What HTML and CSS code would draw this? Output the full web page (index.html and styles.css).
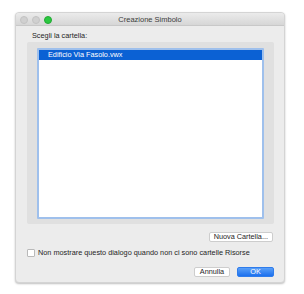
FILE: index.html
```html
<!DOCTYPE html>
<html lang="it">
<head>
    <meta charset="UTF-8">
    <title>Creazione Simbolo</title>
    <link rel="stylesheet" href="styles.css">
</head>
<body>
    <div class="window">
        <div class="titlebar">
            <div class="lights">
                <span class="light"></span>
                <span class="light"></span>
                <span class="light green"></span>
            </div>
            <div class="title">Creazione Simbolo</div>
        </div>
        <div class="content">
            <div class="label">Scegli la cartella:</div>
            <div class="group">
                <div class="list">
                    <div class="row selected">Edificio Via Fasolo.vwx</div>
                </div>
            </div>
            <div class="new-row">
                <button class="btn">Nuova Cartella...</button>
            </div>
            <label class="check-row">
                <span class="checkbox"></span>
                Non mostrare questo dialogo quando non ci sono cartelle Risorse
            </label>
            <div class="actions">
                <button class="btn">Annulla</button>
                <button class="btn primary">OK</button>
            </div>
        </div>
    </div>
</body>
</html>
```

FILE: styles.css
```css
body {
    margin: 0;
    padding: 12px 19px 11px 15px;
    background: #ffffff;
    font-family: "Liberation Sans", Arial, sans-serif;
    font-size: 7.3px;
    color: #1e1e1e;
}
.window {
    width: 270px;
    height: 271px;
    box-sizing: border-box;
    background: #ececec;
    border: 1px solid #d4d4d4;
    border-radius: 4px;
    box-shadow: 0 1px 2px rgba(0, 0, 0, 0.25);
    display: flex;
    flex-direction: column;
    overflow: hidden;
}
.titlebar {
    height: 12px;
    position: relative;
    display: flex;
    align-items: center;
    justify-content: center;
    background: linear-gradient(#ebebeb, #d6d6d6);
    border-bottom: 1px solid #c8c8c8;
}
.lights {
    position: absolute;
    left: 4px;
    top: 3px;
    display: flex;
    gap: 4px;
}
.light {
    width: 6px;
    height: 6px;
    border-radius: 50%;
    background: #d0d0d0;
    border: 0.5px solid #c2c2c2;
}
.light.green {
    background: #2bc840;
    border-color: #22a834;
}
.title {
    font-size: 7.5px;
    color: #3c3c3c;
}
.content {
    padding: 0 10px 0 11px;
    display: flex;
    flex-direction: column;
}
.label {
    margin: 6px 0 0 5px;
    height: 8px;
    line-height: 8px;
}
.group {
    margin-top: 2px;
    height: 182px;
    box-sizing: border-box;
    background: #e0e0e0;
    border-radius: 2px;
    padding: 6px 10px 5px 10px;
    display: flex;
}
.list {
    flex: 1;
    background: #fff;
    border: 2px solid #9fc0ec;
    border-radius: 1px;
}
.row {
    height: 10px;
    line-height: 10px;
    padding-left: 9px;
}
.row.selected {
    background: #0b61d4;
    color: #fff;
}
.new-row {
    display: flex;
    justify-content: flex-end;
    margin-top: 8px;
    padding-right: 1px;
}
.btn {
    font-family: inherit;
    font-size: 7.3px;
    height: 10px;
    line-height: 8px;
    padding: 0 4px;
    background: #fff;
    border: 1px solid #cdcdcd;
    border-radius: 2px;
    color: #1e1e1e;
    margin: 0;
}
.check-row {
    display: flex;
    align-items: center;
    gap: 3px;
    margin-top: 7px;
    height: 7px;
}
.checkbox {
    width: 6px;
    height: 6px;
    background: #fff;
    border: 1px solid #b9b9b9;
    border-radius: 1px;
}
.actions {
    display: flex;
    justify-content: flex-end;
    gap: 7px;
    margin-top: 11px;
}
.actions .btn {
    width: 36px;
}
.btn.primary {
    width: 37px;
    background: linear-gradient(#5aa0f8, #1c70ee);
    border-color: #2f7ceb;
    color: #fff;
}
```
